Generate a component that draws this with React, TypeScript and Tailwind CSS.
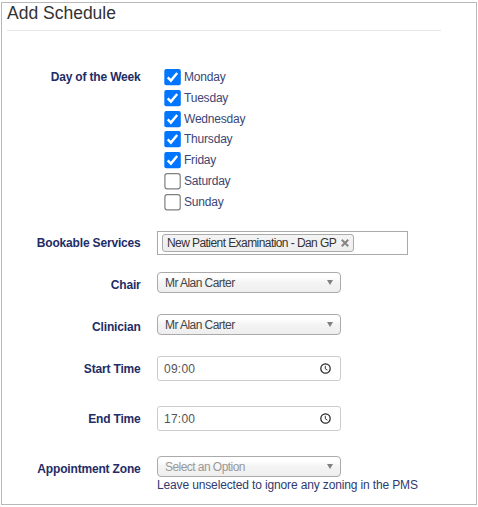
import React, { useState } from "react";

const weekDays = ["Monday", "Tuesday", "Wednesday", "Thursday", "Friday", "Saturday", "Sunday"];

function Row({ label, className, labelClass, children }: { label: string; className: string; labelClass: string; children: React.ReactNode }) {
    return (
        <div className={`flex items-start ${className}`}>
            <div className={`w-[138.6px] shrink-0 text-right text-[12px] leading-[14px] font-bold tracking-[-0.17px] whitespace-nowrap text-[#232c66] ${labelClass}`}>
                {label}
            </div>
            <div className="ml-[16.4px]">{children}</div>
        </div>
    );
}

function Select({ value, muted }: { value: string; muted?: boolean }) {
    return (
        <div className="flex h-[21px] w-[184px] items-center justify-between rounded-[4px] border border-[#aaa] bg-linear-to-b from-white from-20% via-[#f4f4f4] via-50% to-[#eee] pr-[7px] pl-[7px]">
            <span className={`text-[12px] leading-[14px] tracking-[-0.55px] ${muted ? "text-[#999]" : "text-[#444]"}`}>{value}</span>
            <svg width="6" height="5" viewBox="0 0 6 5">
                <path d="M0 0h6L3 5z" fill="#808080" />
            </svg>
        </div>
    );
}

function TimeField({ value }: { value: string }) {
    return (
        <div className="flex h-[25px] w-[184px] items-center justify-between rounded-[3px] border border-[#ccc] bg-white pr-[9px] pl-[6px]">
            <span className="text-[12px] leading-[14px] tracking-[0.25px] text-[#555]">{value}</span>
            <svg width="11" height="11" viewBox="0 0 11 11" fill="none" stroke="#222">
                <circle cx="5.5" cy="5.5" r="4.7" strokeWidth="1.2" />
                <path d="M5.3 2.8v3l2.1 1.3" strokeWidth="0.9" />
            </svg>
        </div>
    );
}

function App() {
    const [days, setDays] = useState<string[]>(weekDays.slice(0, 5));

    const toggle = (day: string) => {
        setDays(days.includes(day) ? days.filter((d) => d !== day) : [...days, day]);
    };

    return (
        <div className="h-[507px] w-[478px] bg-white pt-[2px] pl-px font-['Liberation_Sans',Arial,sans-serif]">
            <div className="h-[503px] w-[476px] border border-[#b8b8b8]">
                <h1 className="ml-[5px] h-[28px] w-[434px] border-b border-[#e8e8e8] text-[17.5px] leading-[21px] text-[#333]">
                    Add Schedule
                </h1>

                <Row label="Day of the Week" className="mt-[38px] h-[162px]" labelClass="mt-px">
                    <div className="ml-[7px] flex flex-col">
                        {weekDays.map((day) => (
                            <div
                                key={day}
                                onClick={() => toggle(day)}
                                className="flex h-[20.83px] cursor-pointer items-start text-[12px] leading-[16px] tracking-[-0.2px] text-[#3b4675]"
                            >
                                {days.includes(day) ? (
                                    <svg width="17" height="17" viewBox="0 0 17 17" className="mr-[3px]">
                                        <rect x="0.3" y="0" width="16.5" height="16.3" rx="2" fill="#0075ff" />
                                        <path d="M3.7 8.4l3.2 3.2 6.3-7.6" fill="none" stroke="#fff" strokeWidth="2.4" />
                                    </svg>
                                ) : (
                                    <svg width="17" height="17" viewBox="0 0 17 17" className="mr-[3px]">
                                        <rect x="0.9" y="0.6" width="15.3" height="15.2" rx="2.3" fill="#fff" stroke="#808080" strokeWidth="1.2" />
                                    </svg>
                                )}
                                {day}
                            </div>
                        ))}
                    </div>
                </Row>

                <Row label="Bookable Services" className="h-[41px]" labelClass="mt-[5px]">
                    <div className="flex h-[24px] w-[251px] items-center border border-[#aaa] bg-white pl-[4px]">
                        <div className="flex h-[18px] w-[192px] items-center justify-between rounded-[3px] border border-[#aaa] bg-linear-to-b from-[#f4f4f4] to-[#eee] pr-[4px] pl-[4px]">
                            <span className="text-[12px] leading-[14px] tracking-[-0.57px] whitespace-nowrap text-[#333]">New Patient Examination - Dan GP</span>
                            <svg width="8" height="8" viewBox="0 0 8 8" stroke="#858585" strokeWidth="2" className="shrink-0">
                                <path d="M0.8 0.8l6.4 6.4M7.2 0.8L0.8 7.2" />
                            </svg>
                        </div>
                    </div>
                </Row>

                <Row label="Chair" className="h-[42px]" labelClass="mt-[6px]">
                    <Select value="Mr Alan Carter" />
                </Row>
                <Row label="Clinician" className="h-[42px]" labelClass="mt-[6px]">
                    <Select value="Mr Alan Carter" />
                </Row>
                <Row label="Start Time" className="h-[50px]" labelClass="mt-[6px]">
                    <TimeField value="09:00" />
                </Row>
                <Row label="End Time" className="h-[50px]" labelClass="mt-[6px]">
                    <TimeField value="17:00" />
                </Row>
                <Row label="Appointment Zone" className="" labelClass="mt-[6px]">
                    <Select value="Select an Option" muted />
                    <p className="mt-[1px] text-[12px] leading-[14px] tracking-[-0.14px] whitespace-nowrap text-[#2f3a70]">
                        Leave unselected to ignore any zoning in the PMS
                    </p>
                </Row>
            </div>
        </div>
    );
}

export default App;
